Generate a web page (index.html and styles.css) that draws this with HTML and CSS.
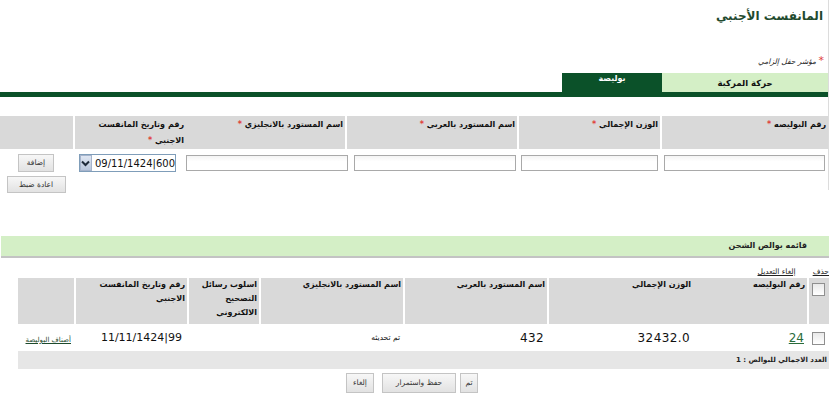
FILE: index.html
```html
<!DOCTYPE html>
<html lang="ar">
<head>
<meta charset="utf-8">
<title>المانفست الأجنبي</title>
<link rel="stylesheet" href="styles.css">
</head>
<body>
<div class="page">
  <div class="top">
    <h1 class="title">المانفست الأجنبي</h1>
    <div class="req"><span class="star">*</span> مؤشر حقل إلزامي</div>
    <div class="tabs">
      <div class="tab tab-light">حركة المركبة</div>
      <div class="tab tab-dark">بوليصة</div>
    </div>
    <div class="tabbar"></div>

    <div class="form-grid">
      <div class="fh sep">رقم البوليصه <span class="star">*</span></div>
      <div class="fh sep">الوزن الإجمالي <span class="star">*</span></div>
      <div class="fh sep">اسم المستورد بالعربي <span class="star">*</span></div>
      <div class="fh">اسم المستورد بالانجليزي <span class="star">*</span></div>
      <div class="fh sep"><span class="line">رقم وتاريخ المانفست</span><span class="line">الاجنبي <span class="star">*</span></span></div>
      <div class="fh"></div>
    </div>

    <div class="form-row">
      <div class="inp w1"></div>
      <div class="inp w2"></div>
      <div class="inp w3"></div>
      <div class="inp w4"></div>
      <div class="combo">
        <span class="combo-text">09/11/1424|600</span>
        <span class="combo-btn"><svg width="9" height="7" viewBox="0 0 9 7"><path d="M1 1.5 L4.5 5 L8 1.5" fill="none" stroke="#1e2a3a" stroke-width="2"/></svg></span>
      </div>
      <div class="btn-col">
        <span class="btn">إضافة</span>
        <span class="btn btn-wide">اعادة ضبط</span>
      </div>
    </div>
  </div>

  <div class="section-bar">قائمه بوالص الشحن</div>

  <div class="links">
    <a class="lnk lnk-del">حذف</a>
    <a class="lnk lnk-cancel">إلغاء التعديل</a>
  </div>

  <div class="list">
    <div class="lh sep lh-cb"><span class="cb"></span></div>
    <div class="lh">رقم البوليصه</div>
    <div class="lh sep">الوزن الإجمالي</div>
    <div class="lh sep">اسم المستورد بالعربي</div>
    <div class="lh sep">اسم المستورد بالانجليزي</div>
    <div class="lh sep"><span class="line">اسلوب رسائل</span><span class="line">التصحيح</span><span class="line">الالكتروني</span></div>
    <div class="lh sep">رقم وتاريخ المانفست الاجنبي</div>
    <div class="lh"></div>

    <div class="ld ld-cb"><span class="cb"></span></div>
    <div class="ld"><a class="num-link">24</a></div>
    <div class="ld num">32432.0</div>
    <div class="ld num">432</div>
    <div class="ld small">تم تحديثه</div>
    <div class="ld"></div>
    <div class="ld mf"><span class="ltr">11/11/1424|99</span></div>
    <div class="ld"><a class="items-link">أصناف البوليصة</a></div>
  </div>

  <div class="total-row">العدد الاجمالي للبوالص : 1</div>

  <div class="actions">
    <span class="btn abtn abtn-ok">تم</span>
    <span class="btn abtn abtn-wide">حفظ واستمرار</span>
    <span class="btn abtn abtn-cancel">إلغاء</span>
  </div>
</div>
</body>
</html>
```

FILE: styles.css
```css
* { box-sizing: border-box; }
body {
  margin: 0;
  background: #ffffff;
  direction: ltr;
  font-family: "DejaVu Sans", "Noto Sans", sans-serif;
  font-size: 10px;
  color: #000;
}
.page {
  width: 829px;
  direction: rtl;
}

.top {
  width: 829px;
  height: 190px;
  border-right: 1px solid #dcdcdc;
}
.title {
  margin: 0;
  height: 30px;
  line-height: 32px;
  padding-right: 5px;
  font-size: 12px;
  font-weight: bold;
  color: #1f4a2e;
}
.req {
  margin-top: 23px;
  height: 15px;
  line-height: 15px;
  padding-right: 4px;
  font-size: 7.5px;
  font-style: italic;
  color: #222;
}
.star { color: #e0403a; font-style: normal; }
.req .star { font-size: 11px; }

.tabs {
  margin-top: 5px;
  display: flex;
  height: 19px;
}
.tab {
  font-weight: bold;
  text-align: center;
}
.tab-light {
  width: 166px;
  background: #d4efc6;
  line-height: 21px;
  font-size: 8.5px;
  color: #111;
}
.tab-dark {
  width: 100px;
  background: #0b5129;
  color: #fff;
  font-size: 8px;
  line-height: 12px;
}
.tabbar {
  width: 828px;
  height: 5px;
  background: #0b5129;
}

.form-grid {
  margin-top: 19px;
  width: 828px;
  display: grid;
  grid-template-columns: 168px 143px 172px 159px 113px 73px;
  height: 33px;
}
.fh {
  background: #d9d9d9;
  padding: 1px 2px 0 0;
  line-height: 16px;
  font-weight: bold;
  font-size: 8px;
  color: #111;
}
.fh.sep { border-left: 2px solid #fff; }
.line { display: block; white-space: nowrap; }

.form-row {
  display: flex;
  align-items: flex-start;
  width: 828px;
  padding-top: 5px;
  padding-right: 3px;
}
.inp {
  height: 16px;
  margin-top: 1px;
  border: 1px solid #a9a9a9;
  background: linear-gradient(#f4f4f4, #ffffff 40%);
}
.w1 { width: 161px; margin-left: 6px; }
.w2 { width: 137px; margin-left: 5px; }
.w3 { width: 162px; margin-left: 6px; }
.w4 { width: 162px; margin-left: 10px; }
.combo {
  width: 97px;
  height: 18px;
  border: 1px solid #7f9db9;
  display: flex;
  align-items: center;
  background: #fff;
  margin-left: 13px;
}
.combo-text {
  flex: 1;
  direction: ltr;
  text-align: left;
  padding-left: 3px;
  font-size: 10px;
  color: #111;
}
.combo-btn {
  width: 15px;
  height: 16px;
  background: linear-gradient(#dfe6f2, #b9c6dc);
  border: 1px solid #a6b4cc;
  display: flex;
  align-items: center;
  justify-content: center;
}
.btn-col {
  width: 60px;
  display: flex;
  flex-direction: column;
  align-items: center;
  gap: 4px;
}
.btn {
  display: inline-block;
  height: 18px;
  line-height: 16px;
  padding: 0 6px;
  border: 1px solid #c4c4c4;
  background: linear-gradient(#f7f7f7, #e2e2e2);
  font-size: 7.5px;
  color: #333;
  text-align: center;
  white-space: nowrap;
}
.btn-col .btn { width: 36px; padding: 0; }
.btn-col .btn-wide { width: 59px; height: 17px; }

.section-bar {
  margin-top: 46px;
  width: 828px;
  height: 22px;
  background: #d4efc6;
  border-bottom: 2px solid #c3c3c3;
  padding-right: 22px;
  line-height: 20px;
  font-size: 8px;
  font-weight: bold;
  color: #222;
}

.links {
  height: 20px;
  display: flex;
  align-items: flex-end;
  padding-bottom: 2px;
  font-size: 7.5px;
}
.lnk { color: #222; text-decoration: underline; }
.lnk-cancel { margin-right: 17px; }

.list {
  width: 811px;
  display: grid;
  grid-template-columns: 22px 114px 146px 144px 144px 72px 113px 56px;
  grid-template-rows: 46px 27px;
}
.lh {
  background: #d9d9d9;
  padding: 0 2px 0 0;
  line-height: 14px;
  font-weight: bold;
  font-size: 8px;
  color: #111;
}
.lh.sep { border-left: 2px solid #fff; }
.lh-cb { padding: 5px 4px 0 0; }
.cb {
  display: block;
  width: 13px;
  height: 13px;
  border: 1px solid #8f8f8f;
  background: linear-gradient(#e9e9e9, #ffffff);
}
.ld {
  padding: 7px 3px 0 0;
  font-size: 12px;
  line-height: 14px;
  color: #111;
  white-space: nowrap;
}
.ld-cb { padding: 8px 4px 0 0; }
.num { letter-spacing: 0.4px; }
.mf { font-size: 11px; padding-right: 5px; }
.ltr { direction: ltr; unicode-bidi: bidi-override; }
.small { font-size: 7.5px; }
.num-link { color: #2a6b3b; text-decoration: underline; font-size: 12px; }
.items-link { color: #1d4a2c; text-decoration: underline; font-size: 7px; }

.total-row {
  width: 811px;
  height: 18px;
  line-height: 18px;
  background: #e6e6e6;
  padding-right: 2px;
  font-size: 7px;
  font-weight: bold;
  color: #222;
}

.actions {
  width: 829px;
  display: flex;
  justify-content: center;
  gap: 4px;
  padding-top: 4px;
  padding-right: 5px;
}
.abtn { height: 20px; line-height: 18px; padding: 0; }
.abtn-ok { width: 18px; }
.abtn-wide { width: 74px; margin-left: 4px; }
.abtn-cancel { width: 28px; }
```
